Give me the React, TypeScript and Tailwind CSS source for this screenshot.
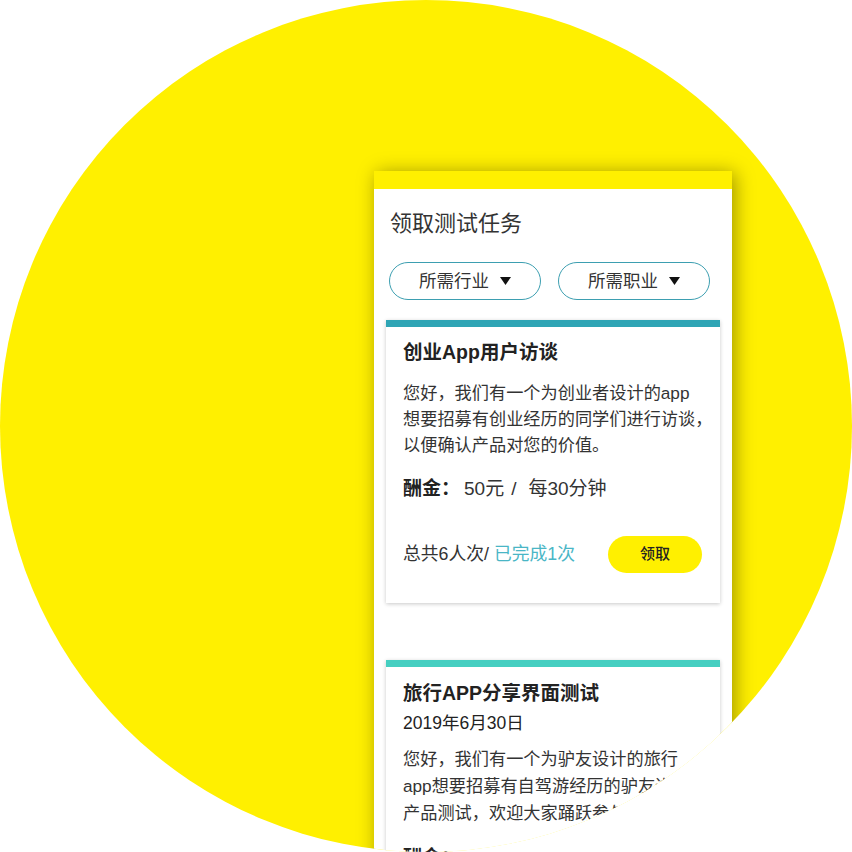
import React from 'react';

const font = { fontFamily: '"Liberation Sans", "Noto Sans CJK SC", sans-serif' };

function Caret() {
  return (
    <svg width="11" height="8" viewBox="0 0 11 8" className="shrink-0">
      <polygon points="0,0 11,0 5.5,8" fill="#111" />
    </svg>
  );
}

function Filter({ label }: { label: string }) {
  return (
    <button className="flex items-center justify-center gap-[11px] w-[152px] h-[38px] rounded-full border-[1.5px] border-[#3d9fb1] bg-white text-[17.5px] text-[#333]">
      <span>{label}</span>
      <Caret />
    </button>
  );
}

function Reward({ amount, per }: { amount: string; per: string }) {
  return (
    <p className="mt-[18px] text-[19px] leading-[26px] text-[#333]">
      <span className="font-bold text-[#222]">酬金：</span>
      <span className="ml-[4px]">{amount}</span>
      <span className="pl-[7px] pr-[12px]">/</span>
      <span>{per}</span>
    </p>
  );
}

export default function App() {
  return (
    <div className="w-[852px] h-[852px] bg-white" style={font}>
      <div className="w-[852px] h-[852px] rounded-full overflow-hidden bg-[#FFF000] pl-[374px] pt-[171px]">
        <div className="w-[358px] h-[760px] bg-white shadow-[3px_2px_18px_rgba(0,0,0,0.38)]">
          {/* barra superior */}
          <div className="h-[18px] bg-[#FFF000]" />

          <div className="pl-[16px] pt-[20px] h-[30px] box-content">
            <h1 className="text-[22px] leading-[30px] text-[#333] font-normal">领取测试任务</h1>
          </div>

          <div className="flex gap-[17px] pl-[15px] mt-[23px]">
            <Filter label="所需行业" />
            <Filter label="所需职业" />
          </div>

          {/* tarjeta 1 */}
          <div className="mx-[12px] mt-[20px] bg-white shadow-[0_1px_4px_rgba(0,0,0,0.22)]">
            <div className="h-[7px] bg-[#2fa5b5]" />
            <div className="px-[17px] pt-[12px] pb-[30px] whitespace-nowrap">
              <h2 className="text-[19.5px] leading-[26px] font-bold text-[#222]">创业App用户访谈</h2>
              <p className="mt-[15px] text-[17.2px] leading-[26px] text-[#333]">
                您好，我们有一个为创业者设计的app
                <br />
                想要招募有创业经历的同学们进行访谈，
                <br />
                以便确认产品对您的价值。
              </p>
              <Reward amount="50元" per="每30分钟" />
              <div className="mt-[34px] flex items-center justify-between">
                <p className="text-[17.8px] text-[#333]">
                  总共6人次/ <span className="text-[#4ab6c6]">已完成1次</span>
                </p>
                <button className="w-[94px] h-[37px] mr-[1px] rounded-full bg-[#FFF000] text-[15px] font-medium text-[#222]">
                  领取
                </button>
              </div>
            </div>
          </div>

          {/* tarjeta 2 */}
          <div className="mx-[12px] mt-[57px] bg-white shadow-[0_1px_4px_rgba(0,0,0,0.22)]">
            <div className="h-[7px] bg-[#46cfc1]" />
            <div className="px-[17px] pt-[13px] pb-[30px] whitespace-nowrap">
              <h2 className="text-[19.5px] leading-[26px] font-bold text-[#222]">旅行APP分享界面测试</h2>
              <p className="mt-[4px] text-[17.5px] leading-[26px] text-[#222]">2019年6月30日</p>
              <p className="mt-[10px] text-[17.2px] leading-[27px] text-[#333]">
                您好，我们有一个为驴友设计的旅行
                <br />
                app想要招募有自驾游经历的驴友进行
                <br />
                产品测试，欢迎大家踊跃参与。
              </p>
              <Reward amount="30元" per="每20分钟" />
            </div>
          </div>
        </div>
      </div>
    </div>
  );
}
